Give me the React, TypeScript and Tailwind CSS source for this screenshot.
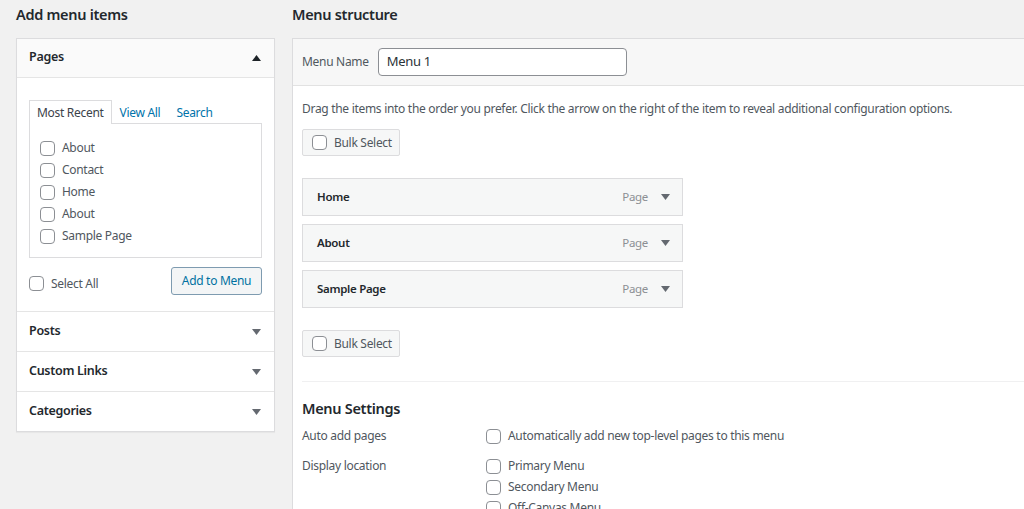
const Box = () => (
  <span className="inline-block w-[15px] h-[15px] shrink-0 rounded-[4px] border border-[#8c8f94] bg-white" />
);

const Tri = ({ up = false, dark = false }: { up?: boolean; dark?: boolean }) => (
  <svg width="9" height="6" viewBox="0 0 9 6" className={dark ? "fill-[#1d2327]" : "fill-[#646970]"}>
    {up ? <polygon points="0,6 9,6 4.5,0" /> : <polygon points="0,0 9,0 4.5,6" />}
  </svg>
);

const BulkSelect = () => (
  <div className="flex items-center gap-[7px] w-[98px] h-[27px] pl-[9px] bg-[#f6f7f7] border border-[#dcdcde] rounded-[2px] text-[12px] text-[#50575e]">
    <Box />
    Bulk Select
  </div>
);

export default function App() {
  const recent = ["About", "Contact", "Home", "About", "Sample Page"];
  const items = ["Home", "About", "Sample Page"];
  const closed = ["Posts", "Custom Links", "Categories"];

  return (
    <div className="w-[1024px] h-[509px] overflow-hidden bg-[#f1f1f1] flex text-[#3c434a] tracking-[-0.3px] font-['Noto_Sans',sans-serif]">
      {/* left column */}
      <div className="w-[259px] shrink-0 ml-[16px]">
        <h2 className="h-[38px] pt-[4px] leading-[20px] text-[14.5px] font-semibold text-[#23282d]">Add menu items</h2>
        <div className="bg-white border border-[#dcdcde] shadow-[0_1px_1px_rgba(0,0,0,0.04)]">
          <div className="h-[39px] flex items-center justify-between pl-[12px] pr-[13px] bg-[#fafafa] border-b border-[#e5e5e5]">
            <span className="text-[12.5px] font-semibold text-[#23282d] -mt-[2px]">Pages</span>
            <Tri up dark />
          </div>
          <div className="px-[12px] pt-[22px]">
            <div className="flex items-end text-[12px] h-[23px]">
              <div className="h-[24px] px-[7px] pt-[1px] flex items-center bg-white border border-b-0 border-[#dcdcde] relative top-px text-[#3c434a]">
                Most Recent
              </div>
              <span className="pl-[8px] pr-[16px] h-[23px] pt-[2px] flex items-center text-[#0073aa]">View All</span>
              <span className="h-[23px] pt-[2px] flex items-center text-[#0073aa]">Search</span>
            </div>
            <div className="border border-[#dcdcde] h-[135px] pt-[13px] pl-[10px]">
              {recent.map((r, i) => (
                <div key={i} className="h-[22px] flex items-center gap-[7px] text-[12px] text-[#50575e]">
                  <Box />
                  {r}
                </div>
              ))}
            </div>
            <div className="flex items-center justify-between pt-[9px] pb-[16px]">
              <div className="flex items-center gap-[7px] pt-[5px] text-[12px] text-[#50575e]">
                <Box />
                Select All
              </div>
              <div className="h-[28px] w-[91px] flex items-center justify-center rounded-[3px] border border-[#7e9bb0] bg-[#f3f5f6] text-[12px] text-[#0071a1]">
                Add to Menu
              </div>
            </div>
          </div>
          {closed.map((c) => (
            <div key={c} className="h-[40px] flex items-center justify-between pl-[12px] pr-[13px] border-t border-[#e5e5e5]">
              <span className="text-[12.5px] font-semibold text-[#23282d]">{c}</span>
              <Tri />
            </div>
          ))}
        </div>
      </div>

      {/* right column */}
      <div className="w-[760px] shrink-0 ml-[17px]">
        <h2 className="h-[38px] pt-[4px] leading-[20px] text-[14.5px] font-semibold text-[#23282d]">Menu structure</h2>
        <div className="bg-white border border-[#dcdcde] h-[500px]">
          <div className="h-[47px] flex items-center px-[9px] bg-[#f7f7f7] border-b border-[#e2e2e2]">
            <span className="text-[12px] text-[#50575e]">Menu Name</span>
            <div className="ml-[9px] w-[249px] h-[28px] flex items-center pl-[8px] rounded-[4px] border border-[#8c8f94] bg-white text-[13px] text-[#2c3338]">
              Menu 1
            </div>
          </div>
          <div className="px-[9px]">
            <p className="pt-[13px] leading-[20px] text-[12px] text-[#50575e]">
              Drag the items into the order you prefer. Click the arrow on the right of the item to reveal additional configuration options.
            </p>
            <div className="mt-[10px]">
              <BulkSelect />
            </div>
            <div className="mt-[22px] flex flex-col gap-[8px] w-[381px]">
              {items.map((m) => (
                <div key={m} className="h-[38px] flex items-center pl-[14px] pr-[12px] bg-[#f6f7f7] border border-[#dcdcde]">
                  <span className="flex-1 text-[11.5px] font-semibold text-[#23282d]">{m}</span>
                  <span className="text-[11.5px] text-[#8c8f94] mr-[13px]">Page</span>
                  <Tri />
                </div>
              ))}
            </div>
            <div className="mt-[22px]">
              <BulkSelect />
            </div>
            <div className="mt-[24px] border-t border-[#f0f0f1]" />
            <h3 className="mt-[16px] leading-[20px] text-[14.5px] font-semibold text-[#23282d]">Menu Settings</h3>
            <div className="mt-[8px] flex text-[12px] text-[#50575e]">
              <span className="w-[184px] leading-[20px]">Auto add pages</span>
              <div className="flex items-center gap-[7px] h-[20px]">
                <Box />
                Automatically add new top-level pages to this menu
              </div>
            </div>
            <div className="mt-[10px] flex text-[12px] text-[#50575e]">
              <span className="w-[184px] leading-[20px]">Display location</span>
              <div className="flex flex-col gap-[1px]">
                {["Primary Menu", "Secondary Menu", "Off-Canvas Menu"].map((l) => (
                  <div key={l} className="flex items-center gap-[7px] h-[20px]">
                    <Box />
                    {l}
                  </div>
                ))}
              </div>
            </div>
          </div>
        </div>
      </div>
    </div>
  );
}
